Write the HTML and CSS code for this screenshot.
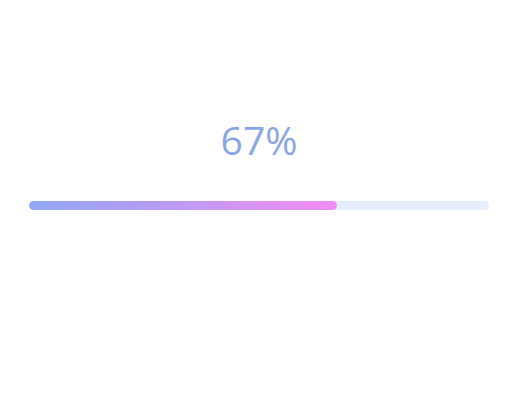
FILE: index.html
```html
<!DOCTYPE html>
<html lang="en">
<head>
    <meta charset="UTF-8">
    <meta name="viewport" content="width=device-width, initial-scale=1.0">
    <title>Progress</title>
    <link rel="stylesheet" href="styles.css">
</head>
<body>
    <div class="progress">
        <div class="progress-value">67%</div>
        <div class="progress-track">
            <div class="progress-fill" style="width: 67%"></div>
        </div>
    </div>
</body>
</html>
```

FILE: styles.css
```css
body {
    margin: 0;
    padding: 0;
    background: #fff;
    font-family: 'Open Sans', 'Noto Sans', sans-serif;
}

.progress {
    width: 460px;
    margin-left: 29px;
    padding-top: 113px;
    display: flex;
    flex-direction: column;
    gap: 35px;
}

.progress-value {
    text-align: center;
    font-size: 39px;
    line-height: 53px;
    color: #8aa4ea;
}

.progress-track {
    height: 9px;
    border-radius: 5px;
    background: #e5eefc;
    overflow: hidden;
}

.progress-fill {
    height: 100%;
    border-radius: 5px;
    background: linear-gradient(90deg, #8ea6f6 0%, #f28cf2 100%);
}
```
